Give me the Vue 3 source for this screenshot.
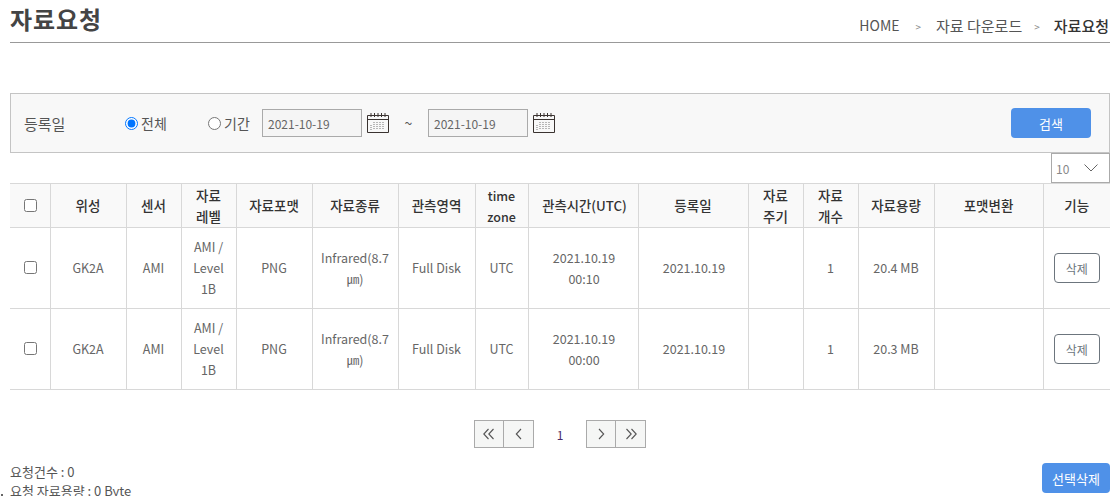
<script setup>
const rows = [
  { time: '00:10', size: '20.4 MB' },
  { time: '00:00', size: '20.3 MB' },
]
const widths = [40, 76, 55, 55, 76, 86, 77, 53, 110, 110, 55, 55, 76, 109, 67]
</script>

<template>
  <div class="page">
    <header class="head">
      <h1>자료요청</h1>
      <nav class="crumbs">
        <span class="home">HOME</span><i class="sep-a">&gt;</i><span class="ko">자료 다운로드</span><i class="sep-b">&gt;</i><b class="ko">자료요청</b>
      </nav>
    </header>

    <section class="search">
      <span class="lbl">등록일</span>
      <label class="radio first"><input type="radio" name="p" checked />전체</label>
      <label class="radio second"><input type="radio" name="p" />기간</label>
      <input class="date" value="2021-10-19" readonly />
      <svg class="cal" viewBox="0 0 22 22" width="22" height="22" fill="none" stroke="#3a3330">
        <path d="M.5 3.500h21v17H.5z" />
        <path d="M.5 7.500h21" />
        <path d="M4 1v4M7.500 1v4M11 1v4M14.500 1v4M18 1v4" />
        <path d="M7 10v8M10 10v8M13 10v8M16 10v8M4 13v5" stroke="#777" stroke-dasharray="1 1" />
      </svg>
      <span class="tilde">~</span>
      <input class="date" value="2021-10-19" readonly />
      <svg class="cal" viewBox="0 0 22 22" width="22" height="22" fill="none" stroke="#3a3330">
        <path d="M.5 3.500h21v17H.5z" />
        <path d="M.5 7.500h21" />
        <path d="M4 1v4M7.500 1v4M11 1v4M14.500 1v4M18 1v4" />
        <path d="M7 10v8M10 10v8M13 10v8M16 10v8M4 13v5" stroke="#777" stroke-dasharray="1 1" />
      </svg>
      <button class="btn go">검색</button>
    </section>

    <div class="size-row">
      <div class="size">
        <span>10</span>
        <svg viewBox="0 0 14 8" width="14" height="8" fill="none" stroke="#666"><path d="M.5.5 7 7l6.500-6.500" /></svg>
      </div>
    </div>

    <table>
      <colgroup>
        <col v-for="(w, i) in widths" :key="i" :style="{ width: w + 'px' }" />
      </colgroup>
      <thead>
        <tr>
          <th><input type="checkbox" /></th>
          <th>위성</th>
          <th>센서</th>
          <th>자료<br />레벨</th>
          <th>자료포맷</th>
          <th>자료종류</th>
          <th>관측영역</th>
          <th class="tz">time<br />zone</th>
          <th class="obs">관측시간(UTC)</th>
          <th>등록일</th>
          <th>자료<br />주기</th>
          <th>자료<br />개수</th>
          <th>자료용량</th>
          <th>포맷변환</th>
          <th>기능</th>
        </tr>
      </thead>
      <tbody>
        <tr v-for="r in rows" :key="r.time">
          <td><input type="checkbox" /></td>
          <td>GK2A</td>
          <td>AMI</td>
          <td>AMI /<br />Level<br />1B</td>
          <td>PNG</td>
          <td>Infrared(8.7<br />㎛)</td>
          <td>Full Disk</td>
          <td>UTC</td>
          <td class="stamp">2021.10.19<br />{{ r.time }}</td>
          <td class="stamp">2021.10.19</td>
          <td></td>
          <td>1</td>
          <td>{{ r.size }}</td>
          <td></td>
          <td class="act"><button class="del">삭제</button></td>
        </tr>
      </tbody>
    </table>

    <div class="pager">
      <div class="group">
        <button aria-label="first">
          <svg viewBox="0 0 12 12" width="12" height="12" fill="none" stroke="#555" stroke-width="1.100"><path d="M5.500 1 .8 6l4.700 5M10.500 1 5.800 6l4.700 5" /></svg>
        </button>
        <button aria-label="previous">
          <svg viewBox="0 0 12 12" width="12" height="12" fill="none" stroke="#555" stroke-width="1.100"><path d="M8 1 3.300 6 8 11" /></svg>
        </button>
      </div>
      <span class="num">1</span>
      <div class="group">
        <button aria-label="next">
          <svg viewBox="0 0 12 12" width="12" height="12" fill="none" stroke="#555" stroke-width="1.100"><path d="m4 1 4.700 5L4 11" /></svg>
        </button>
        <button aria-label="last">
          <svg viewBox="0 0 12 12" width="12" height="12" fill="none" stroke="#555" stroke-width="1.100"><path d="m1.500 1 4.700 5-4.700 5M6.500 1l4.700 5-4.700 5" /></svg>
        </button>
      </div>
    </div>

    <footer class="foot">
      <div class="sum">
        <p>요청건수 : 0</p>
        <p>요청 자료용량 : 0 Byte</p>
      </div>
      <button class="btn del-all">선택삭제</button>
    </footer>
  </div>
</template>

<style scoped>
.page {
  position: relative;
  box-sizing: border-box;
  width: 1113px;
  height: 496px;
  overflow: hidden;
  padding: 0 3px 0 10px;
  font-family: "Noto Sans CJK KR", "Noto Sans", sans-serif;
  font-size: 13px;
  color: #666;
  background: #fff;
}
.page::after {
  content: "";
  position: absolute;
  left: 1px;
  top: 494px;
  width: 2px;
  height: 2px;
  background: #666;
}
.head {
  display: flex;
  justify-content: space-between;
  align-items: flex-end;
  height: 42px;
  border-bottom: 1px solid #999;
}
h1 {
  margin: 0;
  align-self: flex-start;
  font-size: 24px;
  line-height: 38px;
  font-weight: 700;
  letter-spacing: 0.9px;
  color: #444;
}
.crumbs {
  display: flex;
  align-items: center;
  height: 34px;
  font-size: 14px;
  color: #555;
}
.crumbs .ko { font-size: 15px; }
.crumbs i {
  font-style: normal;
  font-size: 10px;
  color: #888;
  margin-top: 2px;
}
.sep-a { margin: 0 15px 0 16px; }
.sep-b { margin: 0 14px 0 12px; }
.crumbs b {
  color: #333;
  font-weight: 500;
  margin-right: 1px;
}
.search {
  box-sizing: border-box;
  display: flex;
  align-items: center;
  height: 60px;
  margin-top: 50px;
  padding: 0 18px 0 13px;
  background: #f8f8f8;
  border: 1px solid #c4c4c4;
  font-size: 14px;
}
.lbl { width: 101px; font-size: 15px; color: #555; }
.radio { display: flex; align-items: center; color: #555; }
.radio input { margin: 0 3px 0 0; width: 13px; height: 13px; }
.first { width: 83px; }
.second { width: 54px; }
.date {
  box-sizing: border-box;
  width: 100px;
  height: 28px;
  padding: 0 5px;
  border: 1px solid #aaa;
  background: #f5f5f5;
  font: inherit;
  font-size: 12px;
  color: #666;
  outline: none;
}
.cal { margin-left: 5px; }
.tilde { width: 39px; text-align: center; font-size: 14px; color: #555; }
.btn {
  border: 0;
  border-radius: 4px;
  background: #4f91e8;
  color: #fff;
  font: inherit;
}
.go {
  width: 80px;
  height: 30px;
  margin-left: auto;
  font-size: 13px;
}
.size-row { display: flex; justify-content: flex-end; }
.size {
  box-sizing: border-box;
  display: flex;
  align-items: center;
  justify-content: space-between;
  width: 59px;
  height: 30px;
  padding: 0 11px 0 4px;
  border: 1px solid #aaa;
  font-size: 12px;
  color: #888;
}
table {
  box-sizing: border-box;
  width: 1100px;
  table-layout: fixed;
  border-collapse: collapse;
  text-align: center;
}
th, td {
  padding: 0;
  border: 1px solid #d8d8d8;
  line-height: 21px;
}
th:first-child, td:first-child { border-left: 0; }
th:last-child, td:last-child { border-right: 0; }
th {
  height: 43px;
  background: #f9f9f9;
  color: #333;
  font-size: 13.500px;
  font-weight: 500;
}
.tz { font-size: 12.500px; }
.obs { font-size: 13.300px; padding-left: 3px; }
td {
  height: 81px;
  padding-bottom: 1px;
  box-sizing: border-box;
  font-size: 12.500px;
}
td.stamp { padding-left: 2px; }
td.act { padding-bottom: 0; }
input[type="checkbox"] {
  display: block;
  width: 13px;
  height: 13px;
  margin: 0 0 0 14px;
}
.del {
  box-sizing: border-box;
  display: block;
  width: 46px;
  height: 30px;
  margin: 0 auto;
  padding: 0;
  border: 1px solid #6c757d;
  border-radius: 4px;
  background: #fff;
  color: #6c757d;
  font: inherit;
  font-size: 12px;
}
.pager {
  display: flex;
  justify-content: center;
  align-items: center;
  margin-top: 30px;
  height: 28px;
}
.group { display: flex; }
.group button {
  box-sizing: border-box;
  display: flex;
  align-items: center;
  justify-content: center;
  width: 31px;
  height: 28px;
  margin-left: -1px;
  padding: 0;
  border: 1px solid #aaa;
  background: #f5f6f5;
}
.group button:first-child { margin-left: 0; width: 30px; }
.num { width: 52px; text-align: center; font-size: 12px; color: #4a2a6a; }
.foot {
  display: flex;
  justify-content: space-between;
  margin-top: 15px;
}
.sum { font-size: 13px; margin-top: -1px; }
.sum p { margin: 0; line-height: 19px; color: #555; }
.del-all { width: 68px; height: 30px; font-size: 13px; }
</style>

<style>
html, body { margin: 0; overflow: hidden; background: #fff; }
</style>
